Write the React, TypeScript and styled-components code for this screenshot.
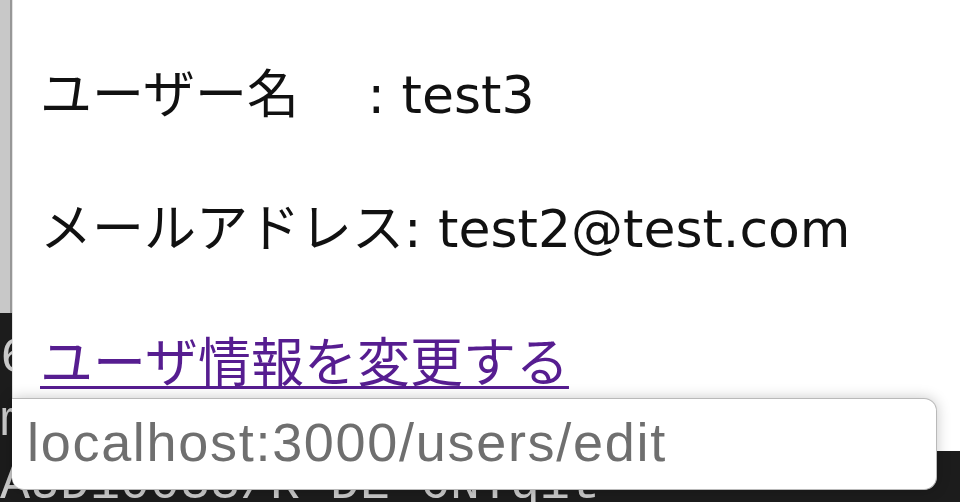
import styled, { createGlobalStyle } from 'styled-components'

const GlobalStyle = createGlobalStyle`
    html, body {
        margin: 0;
        padding: 0;
        background: #1c1c1c;
        overflow: hidden;
    }
`;

const Desktop = styled.div`
    position: relative;
    width: 960px;
    height: 502px;
    overflow: hidden;
    background: #1c1c1c;
`;

const Terminal = styled.pre`
    position: absolute;
    left: 0;
    bottom: -14px;
    margin: 0;
    color: #c9c9c9;
    font-family: "Liberation Mono", monospace;
    font-size: 50px;
    line-height: 63px;
`;

const SidePanel = styled.div`
    position: absolute;
    top: 0;
    left: 0;
    width: 10px;
    height: 313px;
    background: #c8c8c8;
    border-right: 2px solid #979797;
`;

const BrowserWindow = styled.div`
    position: absolute;
    top: 0;
    left: 12px;
    right: 0;
    height: 451px;
    background: #ffffff;
    border-left: 1px solid #e2e2e2;
`;

const Content = styled.main`
    display: flex;
    flex-direction: column;
    align-items: flex-start;
    gap: 70px;
    padding: 61px 0 0 27px;
    font-family: "DejaVu Sans", "Noto Sans CJK JP", sans-serif;
    font-size: 52px;
    line-height: 60px;
    color: #111111;
`;

const Row = styled.p`
    margin: 0;
    white-space: pre;
`;

const Label = styled.span`
    font-family: "Noto Sans CJK JP", sans-serif;
`;

const EditLink = styled.a`
    font-family: "Noto Sans CJK JP", sans-serif;
    font-size: 53px;
    color: #561d90;
    text-decoration: underline;
    text-decoration-thickness: 3px;
    text-underline-offset: 4px;
`;

const StatusBubble = styled.div`
    position: absolute;
    top: 398px;
    left: 12px;
    width: 925px;
    height: 92px;
    box-sizing: border-box;
    display: flex;
    align-items: center;
    padding: 0 0 4px 15px;
    background: #ffffff;
    border: 1px solid #b9b9b9;
    border-left: none;
    border-radius: 0 13px 13px 12px;
    box-shadow: 0 0 14px rgba(0, 0, 0, 0.22);
    color: #6f6f6f;
    font-family: "Liberation Sans", Arial, sans-serif;
    font-size: 54px;
    letter-spacing: 1.7px;
`;

const App = () => {
    const user = { name: 'test3', email: 'test2@test.com' }

    return (
        <>
            <GlobalStyle />
            <Desktop>
                <Terminal>{'6\nm\nAUD10033/R DE 6NYqit'}</Terminal>
                <SidePanel />
                <BrowserWindow>
                    <Content>
                        <Row><Label>{'ユーザー名\u3000'}</Label>{' : ' + user.name}</Row>
                        <Row><Label>メールアドレス</Label>{': ' + user.email}</Row>
                        <Row><EditLink href="#">ユーザ情報を変更する</EditLink></Row>
                    </Content>
                </BrowserWindow>
                <StatusBubble>localhost:3000/users/edit</StatusBubble>
            </Desktop>
        </>
    )
}

export default App
